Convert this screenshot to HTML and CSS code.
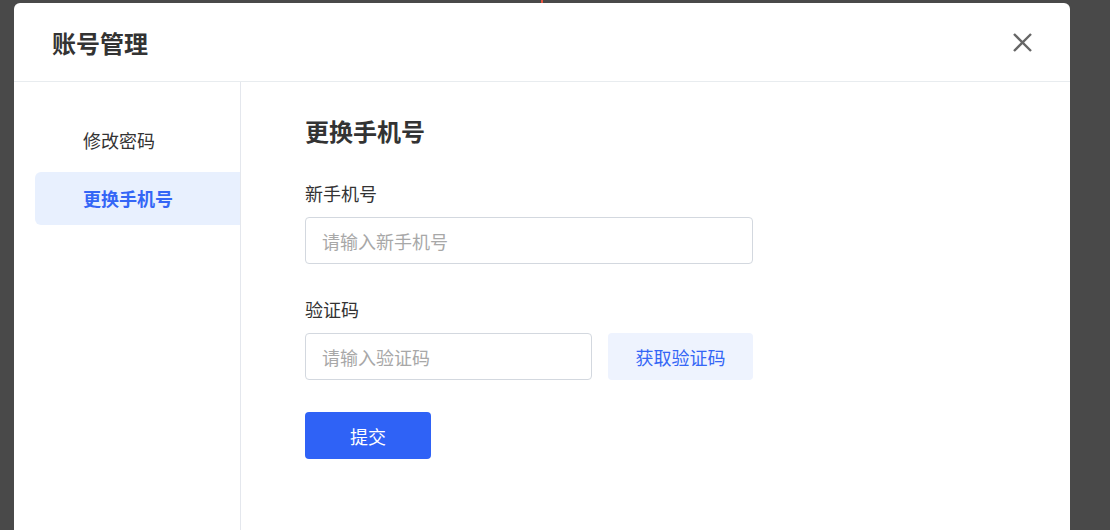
FILE: index.html
```html
<!DOCTYPE html>
<html lang="zh-CN">
<head>
  <meta charset="UTF-8">
  <meta name="viewport" content="width=device-width, initial-scale=1.0">
  <title>账号管理</title>
  <link rel="stylesheet" href="styles.css">
</head>
<body>

<div class="mark"></div>

<div class="modal">
  <div class="modal-header">
    <h2>账号管理</h2>
    <span class="close">
      <svg width="19" height="19" viewBox="0 0 19 19"><path d="M1 1L18 18M18 1L1 18" stroke="#666" stroke-width="2.4" fill="none"/></svg>
    </span>
  </div>

  <div class="modal-body">
    <ul class="side-menu">
      <li>修改密码</li>
      <li class="active">更换手机号</li>
    </ul>

    <form class="panel">
      <h3>更换手机号</h3>

      <label for="phone">新手机号</label>
      <input type="text" id="phone" class="wide" placeholder="请输入新手机号">

      <label for="code">验证码</label>
      <div class="code-row">
        <input type="text" id="code" class="short" placeholder="请输入验证码">
        <button type="button" class="get-code">获取验证码</button>
      </div>

      <button type="button" class="submit">提交</button>
    </form>
  </div>
</div>

</body>
</html>
```

FILE: styles.css
```css
body {
  margin: 0;
  background-color: #494949;
  font-family: "Noto Sans CJK SC", "Noto Sans", sans-serif;
  color: #333;
  height: 530px;
  overflow: hidden;
}
.mark {
  position: absolute;
  left: 541px;
  top: 0;
  width: 2px;
  height: 3px;
  background-color: #e8553f;
}
.modal {
  margin: 3px 0 0 14px;
  width: 1056px;
  height: 527px;
  background-color: #fff;
  border-radius: 6px 6px 0 0;
}
.modal-header {
  height: 78px;
  border-bottom: 1px solid #e8ecef;
  display: flex;
  align-items: center;
  justify-content: space-between;
  padding: 0 38px;
}
.modal-header h2 {
  margin: 0;
  font-size: 24px;
  font-weight: bold;
  color: #333;
}
.close {
  display: flex;
  cursor: pointer;
}
.modal-body {
  display: flex;
  height: 448px;
}
.side-menu {
  list-style: none;
  margin: 0;
  padding: 32px 0 0 21px;
  width: 205px;
  border-right: 1px solid #e4e7ed;
}
.side-menu li {
  height: 53px;
  line-height: 53px;
  padding-left: 48px;
  margin-bottom: 5px;
  font-size: 18px;
  color: #333;
  border-radius: 6px 0 0 6px;
}
.side-menu li.active {
  background-color: #e8f0fe;
  color: #3466f6;
  font-weight: bold;
}
.panel {
  padding: 32px 0 0 64px;
  display: flex;
  flex-direction: column;
  align-items: flex-start;
}
.panel h3 {
  margin: 0 0 32px;
  font-size: 24px;
  line-height: 34px;
  font-weight: bold;
}
.panel label {
  font-size: 18px;
  line-height: 26px;
  margin-bottom: 11px;
}
input[type="text"] {
  height: 47px;
  padding: 0 16px;
  border: 1px solid #d3d8df;
  border-radius: 4px;
  box-sizing: border-box;
  font-family: inherit;
  font-size: 18px;
  color: #333;
  outline: none;
}
input::placeholder {
  color: #a8a8a8;
}
.wide {
  width: 448px;
  margin-bottom: 32px;
}
.code-row {
  display: flex;
  gap: 16px;
  margin-bottom: 32px;
}
.short {
  width: 287px;
}
button {
  height: 47px;
  border: none;
  border-radius: 4px;
  font-family: inherit;
  font-size: 18px;
  cursor: pointer;
}
.get-code {
  width: 145px;
  background-color: #eef3fe;
  color: #3466f6;
}
.submit {
  width: 126px;
  background-color: #2f62f6;
  color: #fff;
}
```
